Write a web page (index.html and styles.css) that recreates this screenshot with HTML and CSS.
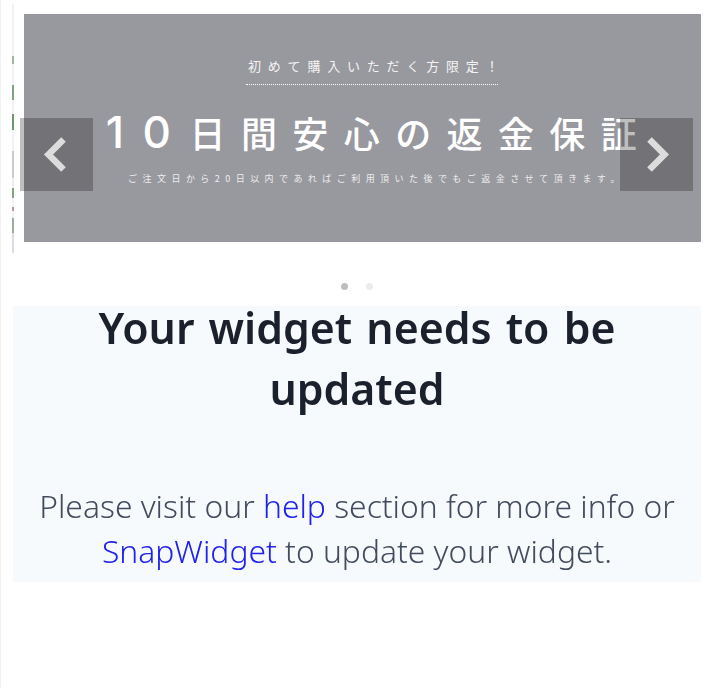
FILE: index.html
```html
<!DOCTYPE html>
<html lang="ja">
<head>
<meta charset="utf-8">
<title>Slider</title>
<link rel="stylesheet" href="styles.css">
</head>
<body>
<div class="page">
  <section class="carousel">
    <div class="stage">
      <div class="sliver"></div>
      <div class="slide">
        <p class="slide-kicker">初めて購入いただく方限定！</p>
        <h2 class="slide-title"><span class="slide-num">10</span>日間安心の返金保証</h2>
        <p class="slide-note">ご注文日から20日以内であればご利用頂いた後でもご返金させて頂きます。</p>
      </div>
      <button class="nav nav-prev" aria-label="前へ">
        <svg viewBox="0 0 73 73" width="73" height="73"><path d="M43.5 21.5 L28.5 36.5 L43.5 51.5" class="chev"/></svg>
      </button>
      <button class="nav nav-next" aria-label="次へ">
        <svg viewBox="0 0 73 73" width="73" height="73"><path d="M29.5 21.5 L44.5 36.5 L29.5 51.5" class="chev"/></svg>
      </button>
    </div>
    <div class="dots">
      <span class="dot dot-active"></span>
      <span class="dot"></span>
    </div>
  </section>
  <section class="widget">
    <h1 class="widget-title">Your widget needs to be updated</h1>
    <p class="widget-text">Please visit our <a href="#" class="link">help</a> section for more info or <a href="#" class="link">SnapWidget</a> to update your widget.</p>
  </section>
</div>
</body>
</html>
```
FILE: styles.css
```css
* { box-sizing: border-box; }
html, body { margin: 0; background: #fff; }
body { font-family: "Noto Sans", "Open Sans", sans-serif; }
.page { width: 726px; height: 688px; padding-left: 1px; border-left: 1px solid #f2f2f2; overflow: hidden; filter: blur(.3px); }

.carousel { height: 306px; }
.stage { position: relative; display: flex; align-items: flex-start; height: 253px; padding-left: 10px; }
.sliver {
  width: 2px; height: 249px; margin-top: 4px;
  background: linear-gradient(#f1f2f8 0 21%, #9db89d 21% 24%, #f1f2f8 24% 32.5%, #7ea580 32.5% 38.5%, #f1f2f8 38.5% 44%, #6a9a6c 44% 50.5%, #f1f2f8 50.5% 59%, #cfc8cc 59% 70%, #eceef2 70% 74%, #7fa882 74% 78%, #f1f2f8 78% 81.5%, #b09a9c 81.5% 83%, #f1f2f8 83% 86%, #a0ab9f 86% 92%, #dcdce4 92% 100%);
}
.slide {
  width: 677px; height: 228px; margin: 14px 0 0 10px; padding-left: 19px;
  background: #98989f; color: #fff; text-align: center;
  font-family: "Noto Sans CJK JP", "Noto Sans", sans-serif;
  display: flex; flex-direction: column; align-items: center;
}
.slide-kicker {
  margin: 42px 0 0; padding: 0 0 8px 2px; width: 252px; height: 29px;
  font-size: 13px; line-height: 20px; letter-spacing: 6.8px; white-space: nowrap;
  border-bottom: 1px dotted #fff; color: #f4f4f4;
}
.slide-title {
  margin: 21px 0 0 14px; font-size: 36px; font-weight: 500; line-height: 52px; letter-spacing: 15.4px; white-space: nowrap;
}
.slide-num { font-family: "Inter", sans-serif; font-size: 44px; font-weight: 500; letter-spacing: 18.5px; }
.slide-note {
  margin: 14px 0 0 9px; font-size: 9px; line-height: 14px; letter-spacing: 5.45px; white-space: nowrap; color: #eee;
}
.nav {
  position: absolute; top: 118px; width: 73px; height: 73px; padding: 0; border: 0;
  background: rgba(0,0,0,.25); display: block;
}
.nav svg { display: block; }
.nav-prev { left: 18px; }
.nav-next { left: 618px; }
.chev { fill: none; stroke: #dcdcdc; stroke-width: 6.5; }

.dots { display: flex; justify-content: center; gap: 18px; padding: 30px 14px 0 0; }
.dot { width: 7px; height: 7px; border-radius: 50%; background: #ececec; }
.dot-active { background: #bdbdbd; }

.widget { display: flow-root; width: 688px; height: 276px; margin-left: 11px; background: #f7fafc; text-align: center; padding: 0 10px; }
.widget-title { margin: -9px 0 0; font-size: 42.8px; font-weight: 600; word-spacing: 3px; line-height: 61px; color: #1a202c; }
.widget-text { margin: 64px -5px 0; font-size: 31.8px; font-weight: 300; line-height: 45px; color: #434c5e; }
.link { color: #2020f0; text-decoration: none; }
```
